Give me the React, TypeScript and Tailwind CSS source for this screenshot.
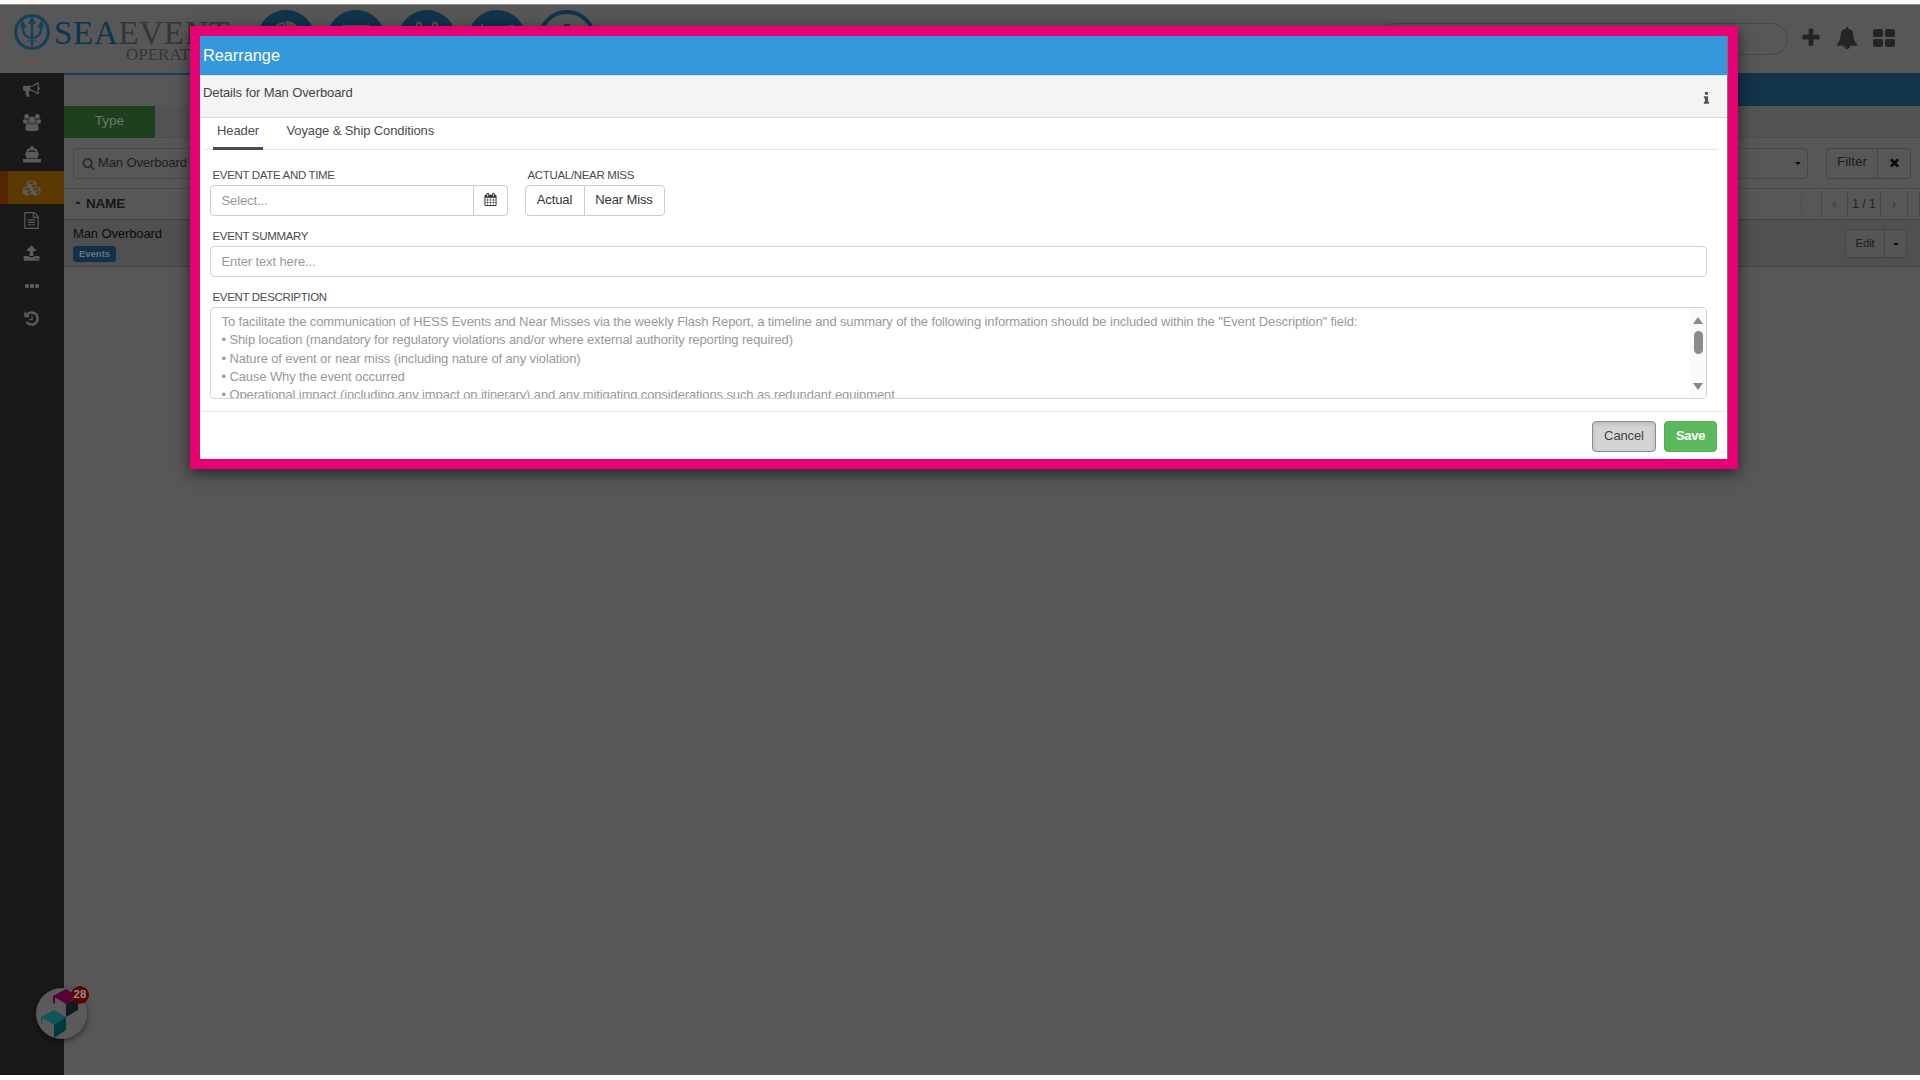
import type { ReactNode } from "react";
import { FaCubes } from "react-icons/fa";

const PATHS = {
  bullhorn:
    "M1664 640q53 0 90.5 37.5t37.5 90.5-37.5 90.5-90.5 37.5v384q0 52-38 90t-90 38q-417-347-812-380-58 19-91 66t-31 100.5 40 92.5q-20 33-23 65.5t6 58 33.5 55 48 50 61.5 50.5q-29 58-111.5 83t-168.5 11.5-132-55.5q-7-23-29.5-87.5t-32-94.5-23-89-15-101 3.5-98.5 22-110.5h-122q-66 0-113-47t-47-113v-192q0-66 47-113t113-47h480q435 0 896-384 52 0 90 38t38 90v384zm-128 604v-954q-394 302-768 343v270q377 42 768 341z",
  users:
    "M593 896q-162 5-265 128h-134q-82 0-138-40.5t-56-118.5q0-353 124-353 6 0 43.5 21t97.5 42.5 119 21.5q67 0 133-23-5 37-5 66 0 139 81 256zm1071 637q0 120-73 189.5t-194 69.5h-874q-121 0-194-69.5t-73-189.5q0-53 3.5-103.5t14-109 26.5-108.5 43-97.5 62-81 85.5-53.5 111.5-20q10 0 43 21.5t73 48 107 48 135 21.5 135-21.5 107-48 73-48 43-21.5q61 0 111.5 20t85.5 53.5 62 81 43 97.5 26.5 108.5 14 109 3.5 103.5zm-1024-1277q0 106-75 181t-181 75-181-75-75-181 75-181 181-75 181 75 75 181zm704 384q0 159-112.5 271.5t-271.5 112.5-271.5-112.5-112.5-271.5 112.5-271.5 271.5-112.5 271.5 112.5 112.5 271.5zm576 225q0 78-56 118.5t-138 40.5h-134q-103-123-265-128 81-117 81-256 0-29-5-66 66 23 133 23 59 0 119-21.5t97.5-42.5 43.5-21q124 0 124 353zm-128-609q0 106-75 181t-181 75-181-75-75-181 75-181 181-75 181 75 75 181z",
  fileText:
    "M1596 380q28 28 48 76t20 88v1152q0 40-28 68t-68 28h-1344q-40 0-68-28t-28-68v-1600q0-40 28-68t68-28h896q40 0 88 20t76 48zm-444-244v376h376q-10-29-22-41l-313-313q-12-12-41-22zm384 1528v-1024h-416q-40 0-68-28t-28-68v-416h-768v1536h1280zm-1024-864q0-14 9-23t23-9h704q14 0 23 9t9 23v64q0 14-9 23t-23 9h-704q-14 0-23-9t-9-23v-64zm736 224q14 0 23 9t9 23v64q0 14-9 23t-23 9h-704q-14 0-23-9t-9-23v-64q0-14 9-23t23-9h704zm0 256q14 0 23 9t9 23v64q0 14-9 23t-23 9h-704q-14 0-23-9t-9-23v-64q0-14 9-23t23-9h704z",
  upload:
    "M1344 1472q0-26-19-45t-45-19-45 19-19 45 19 45 45 19 45-19 19-45zm256 0q0-26-19-45t-45-19-45 19-19 45 19 45 45 19 45-19 19-45zm128-224v320q0 40-28 68t-68 28h-1472q-40 0-68-28t-28-68v-320q0-40 28-68t68-28h427q21 56 70.5 92t110.5 36h256q61 0 110.5-36t70.5-92h427q40 0 68 28t28 68zm-325-648q-17 40-59 40h-256v448q0 26-19 45t-45 19h-256q-26 0-45-19t-19-45v-448h-256q-42 0-59-40-17-39 14-69l448-448q18-19 45-19t45 19l448 448q31 30 14 69z",
  history:
    "M1664 896q0 156-61 298t-164 245-245 164-298 61q-172 0-327-72.5t-264-204.5q-7-10-6.5-22.5t8.5-20.5l137-138q10-9 25-9 16 2 23 12 73 95 179 147t225 52q104 0 198.5-40.5t163.5-109.5 109.5-163.5 40.5-198.5-40.5-198.5-109.5-163.5-163.5-109.5-198.5-40.5q-98 0-188 35.5t-160 101.5l137 138q31 30 14 69-17 40-59 40h-448q-26 0-45-19t-19-45v-448q0-42 40-59 39-17 69 14l130 129q107-101 244.5-156.5t284.5-55.5q156 0 298 61t245 164 164 245 61 298zm-640-288v448q0 14-9 23t-23 9h-320q-14 0-23-9t-9-23v-64q0-14 9-23t23-9h224v-352q0-14 9-23t23-9h64q14 0 23 9t9 23z",
  search:
    "M1216 832q0-185-131.5-316.5t-316.5-131.5-316.5 131.5-131.5 316.5 131.5 316.5 316.5 131.5 316.5-131.5 131.5-316.5zm512 832q0 52-38 90t-90 38q-54 0-90-38l-343-342q-179 124-399 124-143 0-273.5-55.5t-225-150-150-225-55.5-273.5 55.5-273.5 150-225 225-150 273.5-55.5 273.5 55.5 225 150 150 225 55.5 273.5q0 220-124 399l343 343q37 37 37 90z",
  calendar:
    "M192 1664h288v-288h-288v288zm352 0h320v-288h-320v288zm-352-352h288v-320h-288v320zm352 0h320v-320h-320v320zm-352-384h288v-288h-288v288zm736 736h320v-288h-320v288zm-384-736h320v-288h-320v288zm768 736h288v-288h-288v288zm-384-352h320v-320h-320v320zm-352-864v-288q0-13-9.5-22.5t-22.5-9.5h-64q-13 0-22.5 9.5t-9.5 22.5v288q0 13 9.5 22.5t22.5 9.5h64q13 0 22.5-9.5t9.5-22.5zm736 864h288v-320h-288v320zm-384-384h320v-288h-320v288zm384 0h288v-288h-288v288zm32-480v-288q0-13-9.5-22.5t-22.5-9.5h-64q-13 0-22.5 9.5t-9.5 22.5v288q0 13 9.5 22.5t22.5 9.5h64q13 0 22.5-9.5t9.5-22.5zm384-64v1280q0 52-38 90t-90 38h-1408q-52 0-90-38t-38-90v-1280q0-52 38-90t90-38h128v-96q0-66 47-113t113-47h64q66 0 113 47t47 113v96h384v-96q0-66 47-113t113-47h64q66 0 113 47t47 113v96h128q52 0 90 38t38 90z",
  info: "M1216 1344v128q0 26-19 45t-45 19h-512q-26 0-45-19t-19-45v-128q0-26 19-45t45-19h64v-384h-64q-26 0-45-19t-19-45v-128q0-26 19-45t45-19h384q26 0 45 19t19 45v576h64q26 0 45 19t19 45zm-128-1152v192q0 26-19 45t-45 19h-256q-26 0-45-19t-19-45v-192q0-26 19-45t45-19h256q26 0 45 19t19 45z",
  close:
    "M1490 1322q0 40-28 68l-136 136q-28 28-68 28t-68-28l-294-294-294 294q-28 28-68 28t-68-28l-136-136q-28-28-28-68t28-68l294-294-294-294q-28-28-28-68t28-68l136-136q28-28 68-28t68 28l294 294 294-294q28-28 68-28t68 28l136 136q28 28 28 68t-28 68l-294 294 294 294q28 28 28 68z",
  plus: "M1600 736v192q0 40-28 68t-68 28h-416v416q0 40-28 68t-68 28h-192q-40 0-68-28t-28-68v-416h-416q-40 0-68-28t-28-68v-192q0-40 28-68t68-28h416v-416q0-40 28-68t68-28h192q40 0 68 28t28 68v416h416q40 0 68 28t28 68z",
  bell: "M912 1696q0-16-16-16-59 0-101.5-42.5t-42.5-101.5q0-16-16-16t-16 16q0 73 51.5 124.5t124.5 51.5q16 0 16-16zm816-288q0 52-38 90t-90 38h-448q0 106-75 181t-181 75-181-75-75-181h-448q-52 0-90-38t-38-90q50-42 91-88t85-119.5 74.5-158.5 50-206 19.5-260q0-152 117-282.5t307-158.5q-8-19-8-39 0-40 28-68t68-28 68 28 28 68q0 20-8 39 190 28 307 158.5t117 282.5q0 139 19.5 260t50 206 74.5 158.5 85 119.5 91 88z",
};

type IconProps = {
  name: keyof typeof PATHS;
  className: string;
  width?: number;
};

function Icon({ name, className, width = 1792 }: IconProps) {
  return (
    <svg viewBox={`0 0 ${width} 1792`} fill="currentColor" className={className}>
      <path d={PATHS[name]} />
    </svg>
  );
}

function ShipIcon() {
  return (
    <svg viewBox="0 0 18 18" fill="currentColor" className="w-[18px] h-[18px]">
      <path
        fillRule="evenodd"
        d="M7 .5h4v1.700c2 .3 3.500 1.300 3.500 3.300L16 8l-1.700 4.500H3.700L2 8l1.500-2.500c0-2 1.500-3 3.500-3.300zM5.500 5v1.300L9 5.500l3.500.8V5c-1-1-6-1-7 0z"
      />
      <path d="M0 13h18v3.500H0z" />
    </svg>
  );
}

function TridentLogo() {
  return (
    <svg viewBox="0 0 36 36" fill="none" stroke="#16405c" className="w-9 h-9">
      <circle cx="18" cy="18" r="16.300" strokeWidth="3.200" />
      <path d="M18 6v26M9 11c-.5 9 3 13 9 13s9.500-4 9-13" strokeWidth="2.400" />
      <path d="M18 3.500l-3 6h6zM8.500 7.500L6.500 13h5zM27.500 7.500l-3 5.500h5zM13 27h10" strokeWidth="1.200" fill="#16405c" />
    </svg>
  );
}

const sideItems: { id: string; icon: ReactNode }[] = [
  { id: "news", icon: <Icon name="bullhorn" className="w-[17px] h-[17px]" /> },
  { id: "users", icon: <Icon name="users" width={1920} className="w-[18px] h-[17px]" /> },
  { id: "ship", icon: <ShipIcon /> },
  { id: "items", icon: <FaCubes className="w-[21px] h-[18px]" /> },
  { id: "docs", icon: <Icon name="fileText" className="w-[17px] h-[17px]" /> },
  { id: "upload", icon: <Icon name="upload" className="w-[17px] h-[17px]" /> },
  {
    id: "more",
    icon: (
      <span className="flex gap-px">
        <span className="w-1 h-1 rounded-[1px] bg-current" />
        <span className="w-1 h-1 rounded-[1px] bg-current" />
        <span className="w-1 h-1 rounded-[1px] bg-current" />
      </span>
    ),
  },
  { id: "history", icon: <Icon name="history" className="w-[17px] h-[17px]" /> },
];

function Sidebar() {
  return (
    <div className="w-16 shrink-0 bg-[#191919] text-[#5b5b5b]">
      {sideItems.map((item) => (
        <div
          key={item.id}
          className={
            item.id === "items"
              ? "h-[33px] flex items-center justify-center bg-[#5b3900] border-l-8 border-[#542500] pr-2.5"
              : "h-[32.700px] flex items-center justify-center pr-px"
          }
        >
          {item.icon}
        </div>
      ))}
    </div>
  );
}

function Caret({ up = false }: { up?: boolean }) {
  return (
    <span
      className={
        up
          ? "mb-1 border-x-[3px] border-x-transparent border-b-[3px] border-b-[#1c1c1c]"
          : "border-x-[3px] border-x-transparent border-t-[3px] border-t-[#0c0c0c]"
      }
    />
  );
}

function TopBar() {
  return (
    <div className="h-[68px] flex shrink-0">
      <div className="flex w-[257px] pl-3.5 pt-[9px]">
        <TridentLogo />
        <div className="pl-1 font-['Liberation_Serif'] text-[#353535] whitespace-nowrap">
          <div className="text-[33px] leading-[34px] h-[34px] pt-[2px] tracking-[0.700px]">
            <span className="text-[#07364d]">SEA</span>EVENT
          </div>
          <div className="text-[17px] leading-[14px] pl-[72px]">OPERATIONS</div>
        </div>
      </div>
      <div className="flex gap-[12.300px] pt-[5px]">
        <div className="w-[58px] h-[58px] rounded-full bg-[#12334a] flex justify-center pt-[11px]">
          <svg viewBox="0 0 26 26" className="w-[26px] h-[26px]" fill="none" stroke="#565656" strokeWidth="2">
            <path d="M11 2a11 11 0 1 0 11 13H11z" />
            <path d="M14 1v10h11A11 11 0 0 0 14 1z" fill="#565656" />
          </svg>
        </div>
        <div className="w-[58px] h-[58px] rounded-full bg-[#12334a] flex justify-center pt-[15px]">
          <div className="w-7 h-7 border-2 border-[#565656]" />
        </div>
        <div className="w-[58px] h-[58px] rounded-full bg-[#12334a] flex justify-center pt-[11px]">
          <svg viewBox="0 0 26 26" className="w-[26px] h-[26px]" fill="none" stroke="#565656" strokeWidth="2">
            <path d="M3 8V3.500a2 2 0 0 1 4 0V8M19 8V3.500a2 2 0 0 1 4 0V8M1 6h24v19H1z" />
          </svg>
        </div>
        <div className="w-[58px] h-[58px] rounded-full bg-[#12334a] flex justify-center pt-[14px]">
          <svg viewBox="0 0 36 26" className="w-9 h-[26px]" fill="none" stroke="#565656" strokeWidth="2">
            <path d="M3 0v24h32M6 20l8-8 6 4L31 2h4" />
          </svg>
        </div>
        <div className="w-[58px] h-[58px] rounded-full border-4 border-[#12334a] flex justify-center pt-[10px]">
          <div className="w-1.5 h-6 bg-[#12334a]" />
        </div>
      </div>
      <div className="ml-auto flex">
        <div className="w-[410px] h-8 mt-[18px] rounded-full border border-[#474747]" />
        <div className="flex text-[#242424] pl-3 pr-[25px]">
          <Icon name="plus" className="w-[22px] h-[22px] mt-[22px]" />
          <Icon name="bell" className="w-[22px] h-[22px] mt-[22px] ml-[14px]" />
          <div className="grid grid-cols-2 gap-0.5 w-[22px] h-[18px] mt-6 ml-[15px]">
            <span className="bg-current rounded-xs" />
            <span className="bg-current rounded-xs" />
            <span className="bg-current rounded-xs" />
            <span className="bg-current rounded-xs" />
          </div>
        </div>
      </div>
    </div>
  );
}

function Listing() {
  return (
    <div className="flex-1 min-w-0">
      <div className="h-[33px] flex border-t-2 border-[#183f59]">
        <div className="ml-auto w-[400px] -mt-0.5 bg-[#12334a]" />
      </div>

      <div className="h-8 flex bg-[#535353] border-b border-[#4b4b4b]">
        <div className="w-[91px] h-8 flex items-center justify-center pb-0.5 bg-[#1f401f] text-[#6c7a6c] text-[13.500px]">
          Type
        </div>
      </div>

      {/* Filters */}
      <div className="h-[50px] flex items-center pl-[9px] pr-[9px]">
        <div className="flex-1 h-[31px] flex items-center justify-between rounded-sm border border-[#484848] pl-2 pr-1.5 mr-[18px]">
          <div className="flex items-center text-[#1e1e1e] text-[13px] tracking-[-0.115px]">
            <Icon name="search" className="w-[13px] h-[13px] mr-[3px] text-[#2b2b2b]" />
            Man Overboard
          </div>
          <Caret />
        </div>
        <div className="flex h-[31px] rounded-sm border border-[#444] text-[#1b1b1b]">
          <div className="w-[51px] flex items-center justify-center pb-px text-[13.500px] border-r border-[#444]">Filter</div>
          <div className="w-8 flex items-center justify-center pb-px">
            <Icon name="close" className="w-[13px] h-[13px] text-[#0c0c0c]" />
          </div>
        </div>
      </div>

      {/* Column header */}
      <div className="h-8 flex items-center border-t border-b border-t-[#4a4a4a] border-b-[#434343] pl-[11px]">
        <Caret up />
        <span className="ml-[5px] text-[13.500px] tracking-[-0.200px] font-bold text-[#161616]">NAME</span>
        <div className="ml-auto flex h-[26px] items-center text-[#222] text-[12px]">
          <div className="w-5 h-4 border-l border-[#4c4c4c]" />
          <div className="w-[26px] h-full flex items-center justify-center border-l border-[#444] text-[13px] text-[#333]">‹</div>
          <div className="w-[33px] h-full flex items-center justify-center border-l border-[#444]">1 / 1</div>
          <div className="w-[27px] h-full flex items-center justify-center border-l border-[#444] text-[13px] text-[#333]">›</div>
          <div className="w-3 h-full border-l border-[#444]" />
          <div className="w-px h-full border-l border-[#484848]" />
        </div>
      </div>

      <div className="h-[47px] flex bg-[#505050] border-b border-[#444] pl-[9px] pr-[13px]">
        <div className="pt-[5px]">
          <div className="text-[13px] tracking-[-0.115px] leading-[18px] text-[#0a0a14]">Man Overboard</div>
          <div className="mt-[3px] w-[43px] h-4 flex items-center justify-center rounded-[3px] bg-[#12304a] text-[9.500px] font-bold text-[#6b747b]">
            Events
          </div>
        </div>
        <div className="ml-auto mt-[9px] flex h-[29px] rounded-sm border border-[#444] bg-[#555] text-[#1b1b1b]">
          <div className="w-[39px] flex items-center justify-center text-[11.500px] tracking-[-0.200px] border-r border-[#444]">
            Edit
          </div>
          <div className="w-[21px] flex items-center justify-center pt-0.5">
            <Caret />
          </div>
        </div>
      </div>
    </div>
  );
}

const description = [
  'To facilitate the communication of HESS Events and Near Misses via the weekly Flash Report, a timeline and summary of the following information should be included within the "Event Description" field:',
  "• Ship location (mandatory for regulatory violations and/or where external authority reporting required)",
  "• Nature of event or near miss (including nature of any violation)",
  "• Cause Why the event occurred",
  "• Operational impact (including any impact on itinerary) and any mitigating considerations such as redundant equipment",
];

function Label({ children }: { children: ReactNode }) {
  return (
    <div className="h-[21px] pl-[3px] pt-px leading-[21px] text-[11.500px] tracking-[-0.330px] text-[#4c4c4c]">
      {children}
    </div>
  );
}

function RearrangeModal() {
  return (
    <div className="absolute left-[190px] top-[26px] w-[1548px] h-[443px] flex border-[10px] border-[#e50073] shadow-[0_4px_14px_rgba(0,0,0,0.6)]">
      <div className="flex-1 min-w-0 flex flex-col bg-white border-r border-[#777] text-[13px] tracking-[-0.115px]">
        <div className="h-[39px] shrink-0 flex items-center bg-[#3498db] pl-[3px] pb-px text-white text-[16.300px] tracking-normal">
          Rearrange
        </div>
        <div className="h-[43px] shrink-0 flex justify-between bg-[#f4f4f4] border-t border-t-[#cfe3f1] border-b border-b-[#d9d9d9] pl-[3px] pr-[13px] text-[#444]">
          <span className="pt-[8px] leading-[18px]">Details for Man Overboard</span>
          <Icon name="info" className="w-[15px] h-[15px] mt-[15px] text-[#555]" />
        </div>

        {/* Tabs */}
        <div className="h-8 shrink-0 flex ml-[3px] mr-[9px] pl-2.5 border-b border-[#e4e4e4] leading-[25px] text-[#4c4c4c]">
          <div className="h-8 w-[50px] text-center border-b-[3px] border-[#4c4c4c]">Header</div>
          <div className="ml-[23.500px]">Voyage &amp; Ship Conditions</div>
        </div>

        <div className="flex-1 pl-[9.500px] pr-5 pt-[14px]">
          <div className="flex">
            <div className="w-[298px]">
              <Label>EVENT DATE AND TIME</Label>
              <div className="h-[31px] flex border border-[#ccc] rounded-sm">
                <div className="flex-1 pl-[11px] leading-[29px] text-[#999]">Select...</div>
                <div className="w-[34px] flex items-center justify-center pb-0.5 border-l border-[#ccc]">
                  <Icon name="calendar" className="w-[13px] h-[13px] text-[#333]" />
                </div>
              </div>
            </div>
            <div className="ml-[17px]">
              <Label>ACTUAL/NEAR MISS</Label>
              <div className="h-[31px] w-[140px] flex border border-[#ccc] rounded-sm leading-[27px] text-center text-[#333]">
                <div className="w-[58px]">Actual</div>
                <div className="flex-1 border-l border-[#ccc]">Near Miss</div>
              </div>
            </div>
          </div>

          <div className="mt-[9px]">
            <Label>EVENT SUMMARY</Label>
            <div className="h-[31px] pl-[11px] border border-[#d4d4d4] rounded-sm leading-[29px] text-[#999]">
              Enter text here...
            </div>
          </div>

          <div className="mt-[9px]">
            <Label>EVENT DESCRIPTION</Label>
            <div className="h-[92px] flex overflow-hidden border border-[#d4d4d4] rounded-sm">
              <div className="flex-1 pl-[11px] pt-[5px] leading-[18.280px] text-[#999] whitespace-nowrap">
                {description.map((line) => (
                  <div key={line}>{line}</div>
                ))}
              </div>
              <div className="w-4 flex flex-col items-center bg-[#fafafa] pt-[9px]">
                <span className="border-x-[5px] border-x-transparent border-b-[7px] border-b-[#8b8b8b]" />
                <span className="w-[9px] h-[23px] mt-[7px] rounded-full bg-[#8b8b8b]" />
                <span className="mt-[29px] border-x-[5px] border-x-transparent border-t-[7px] border-t-[#8b8b8b]" />
              </div>
            </div>
          </div>
        </div>

        {/* Footer */}
        <div className="h-12 shrink-0 flex justify-end gap-2 border-t border-[#e8e8e8] pt-[9px] pr-2.5 leading-[27px] text-center">
          <div className="w-16 h-[31px] rounded-sm border border-[#8c8c8c] bg-[#d4d4d4] text-[#444] shadow-[inset_0_2px_4px_rgba(0,0,0,0.120)]">
            Cancel
          </div>
          <div className="w-[53px] h-[31px] rounded-sm border border-[#4cae4c] bg-[#5cb85c] text-white font-bold tracking-[-0.300px]">
            Save
          </div>
        </div>
      </div>
    </div>
  );
}

function HelpBubble() {
  return (
    <div className="absolute left-9 top-[988px] w-[51px] h-[51px] rounded-full bg-[#5a5a5a] shadow-[0_2px_6px_rgba(0,0,0,0.5)]">
      <svg viewBox="0 0 51 51" className="w-[51px] h-[51px]">
        <path d="M17 8l13-7 12 7.500L30 16zM17 8l2 1v6l-2 1z" fill="#5b0036" />
        <path d="M30 16l12-7v13l-12 7z" fill="#15191f" />
        <path d="M5 29l13-7 12 7-12 8zM5 29l1.500 1v5L5 36z" fill="#0f5559" />
        <path d="M18 37l12-8v13l-12 8z" fill="#003a3f" />
      </svg>
      <div className="absolute left-[35px] -top-0.5 w-[18px] h-[18px] rounded-full bg-[#5c0000] flex items-center justify-center text-[11.500px] font-bold text-[#8e8e8e]">
        28
      </div>
    </div>
  );
}

export default function App() {
  return (
    <div className="relative w-[1920px] h-[1080px] overflow-hidden bg-white pt-1 pb-1 font-['Liberation_Sans',Arial,sans-serif]">
      <div className="h-[1071px] flex flex-col bg-[#575757] border-t border-[#8f8f8f]">
        <TopBar />
        <div className="flex flex-1">
          <Sidebar />
          <Listing />
        </div>
      </div>
      <RearrangeModal />
      <HelpBubble />
    </div>
  );
}
